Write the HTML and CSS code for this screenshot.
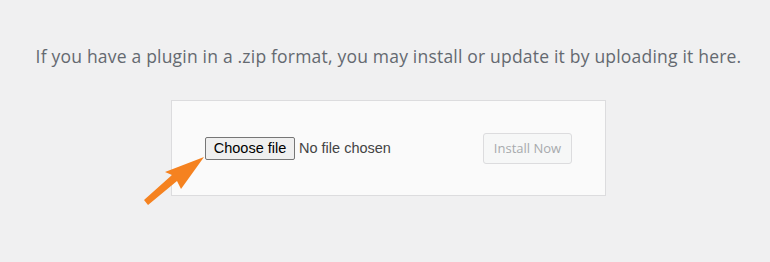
FILE: index.html
```html
<!DOCTYPE html>
<html lang="en">
<head>
    <meta charset="UTF-8">
    <title>Upload Plugin</title>
    <link rel="stylesheet" href="styles.css">
</head>
<body>
    <div class="upload-plugin">
        <p class="install-help">If you have a plugin in a .zip format, you may install or update it by uploading it here.</p>

        <form class="upload-form">
            <div class="file-input">
                <button type="button" class="file-btn">Choose file</button>
                <span class="file-name">No file chosen</span>
            </div>
            <button type="button" class="install-btn" disabled>Install Now</button>

            <svg class="arrow" width="70" height="56" viewBox="0 0 70 56">
                <polygon points="64,1 41,33 37,25 8,49 4,44 32,19 25,16" fill="#f58220"/>
            </svg>
        </form>
    </div>
</body>
</html>
```

FILE: styles.css
```css
* {
    box-sizing: border-box;
}

body {
    margin: 0;
    min-height: 100vh;
    background: #f0f0f1;
    font-family: "Open Sans", sans-serif;
}

.upload-plugin {
    padding: 44px 0 0 7px;
}

.install-help {
    margin: 0 0 32px;
    text-align: center;
    font-size: 17.5px;
    letter-spacing: 0.2px;
    line-height: 24px;
    color: #646970;
}

.upload-form {
    position: relative;
    width: 435px;
    height: 96px;
    margin: 0 auto;
    padding: 0 33px 0 33px;
    background: #fafafa;
    border: 1px solid #dcdcde;
    display: flex;
    align-items: center;
    justify-content: space-between;
}

.file-input {
    display: flex;
    align-items: center;
    gap: 4px;
    font-family: "Liberation Sans", Arial, sans-serif;
    font-size: 14.5px;
}

.file-btn {
    height: 23px;
    width: 90px;
    padding: 0;
    font: inherit;
    color: #000;
    background: #efefef;
    border: 1px solid #767676;
    border-radius: 2px;
}

.file-name {
    color: #444;
}

.install-btn {
    width: 89px;
    height: 31px;
    padding: 0;
    font-family: "Open Sans", sans-serif;
    font-size: 13px;
    color: #a7aaad;
    background: #f6f7f7;
    border: 1px solid #dcdcde;
    border-radius: 3px;
}

.arrow {
    position: absolute;
    left: -32px;
    top: 55px;
}
```
